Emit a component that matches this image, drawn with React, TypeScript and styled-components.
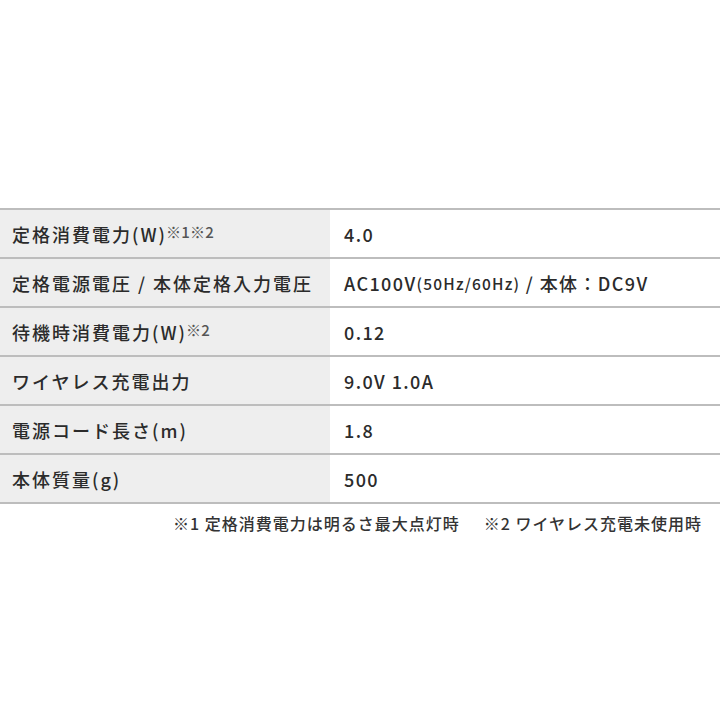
import styled, { createGlobalStyle } from "styled-components";

const GlobalStyle = createGlobalStyle`
    html,
    body {
        margin: 0;
        padding: 0;
        background: #ffffff;
    }

    body {
        font-family: "Noto Sans CJK JP", "Noto Sans", sans-serif;
        font-weight: 500;
        color: #2b2b2b;
    }
`;

const Page = styled.main`
    width: 720px;
    height: 720px;
    padding-top: 208px;
    box-sizing: border-box;
`;

const SpecTable = styled.section`
    display: grid;
    grid-template-columns: 330px 1fr;
    border-top: 2px solid #bdbdbd;
`;

const Label = styled.div`
    display: flex;
    align-items: center;
    height: 47px;
    padding-left: 12px;
    background: #eeeeee;
    border-bottom: 2px solid #bdbdbd;
    font-size: 18px;
    letter-spacing: 2px;
    white-space: nowrap;
`;

const Value = styled.div`
    display: flex;
    align-items: center;
    height: 47px;
    padding-left: 14px;
    border-bottom: 2px solid #bdbdbd;
    font-size: 18px;
    letter-spacing: 1.4px;
    white-space: pre;
`;

const Note = styled.span`
    font-size: 15px;
    letter-spacing: 0.3px;
    color: #555555;
    position: relative;
    top: -2px;
    margin-left: -1px;
`;

const Small = styled.span`
    font-size: 15.5px;
    letter-spacing: 1.2px;
`;

const Footnotes = styled.footer`
    display: flex;
    justify-content: flex-end;
    gap: 24px;
    padding: 7px 18px 0 0;
    font-size: 16px;
    letter-spacing: 1px;
    color: #333333;
`;

interface SpecRow {
    label: string;
    note?: string;
    value: React.ReactNode;
}

const rows: SpecRow[] = [
    {
        label: "定格消費電力(W)",
        note: "※1※2",
        value: "4.0",
    },
    {
        label: "定格電源電圧 / 本体定格入力電圧",
        value: (
            <>
                {"AC100V"}
                <Small>(50Hz/60Hz)</Small>
                {" / 本体：DC9V"}
            </>
        ),
    },
    {
        label: "待機時消費電力(W)",
        note: "※2",
        value: "0.12",
    },
    {
        label: "ワイヤレス充電出力",
        value: "9.0V 1.0A",
    },
    {
        label: "電源コード長さ(m)",
        value: "1.8",
    },
    {
        label: "本体質量(g)",
        value: "500",
    },
];

export default function App() {
    return (
        <Page>
            <GlobalStyle />
            <SpecTable>
                {rows.map((row) => [
                    <Label key={row.label}>
                        {row.label}
                        {row.note && <Note>{row.note}</Note>}
                    </Label>,
                    <Value key={row.label + "-v"}>
                        {row.value}
                    </Value>,
                ])}
            </SpecTable>
            <Footnotes>
                <span>※1 定格消費電力は明るさ最大点灯時</span>
                <span>※2 ワイヤレス充電未使用時</span>
            </Footnotes>
        </Page>
    );
}
